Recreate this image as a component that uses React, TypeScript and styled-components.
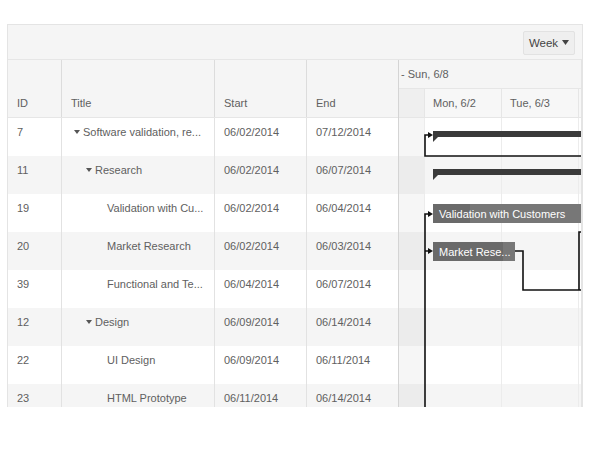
import React from 'react';
import styled, { createGlobalStyle } from 'styled-components';

const GlobalStyle = createGlobalStyle`
  body {
    margin: 0;
    background: #ffffff;
    font-family: "Liberation Sans", Arial, sans-serif;
    font-size: 11px;
    color: #606060;
  }
`;

const ROW_HEIGHT = 38;
const DAY_WIDTH = 77;
const SCROLL_LEFT = 51;

interface ITask {
  id: number;
  title: string;
  start: string;
  end: string;
  level: number;
  summary?: boolean;
}

const tasks: ITask[] = [
  { id: 7, title: 'Software validation, re...', start: '06/02/2014', end: '07/12/2014', level: 0, summary: true },
  { id: 11, title: 'Research', start: '06/02/2014', end: '06/07/2014', level: 1, summary: true },
  { id: 19, title: 'Validation with Cu...', start: '06/02/2014', end: '06/04/2014', level: 2 },
  { id: 20, title: 'Market Research', start: '06/02/2014', end: '06/03/2014', level: 2 },
  { id: 39, title: 'Functional and Te...', start: '06/04/2014', end: '06/07/2014', level: 2 },
  { id: 12, title: 'Design', start: '06/09/2014', end: '06/14/2014', level: 1, summary: true },
  { id: 22, title: 'UI Design', start: '06/09/2014', end: '06/11/2014', level: 2 },
  { id: 23, title: 'HTML Prototype', start: '06/11/2014', end: '06/14/2014', level: 2 },
];

// only the days that fall inside the visible part of the timeline
const days = [
  { label: 'Sun, 6/1', weekend: true },
  { label: 'Mon, 6/2' },
  { label: 'Tue, 6/3' },
  { label: '' },
];

// bars in timeline coordinates (left edge = Sunday column start)
const bars = [
  { row: 0, left: 85, width: 420, summary: true },
  { row: 1, left: 85, width: 420, summary: true },
  { row: 2, left: 85, width: 420, title: 'Validation with Customers', progress: 37 },
  { row: 3, left: 85, width: 82, title: 'Market Rese...', progress: 70 },
];

function Caret() {
  return (
    <CaretBox>
      <svg width="6" height="4" viewBox="0 0 6 4">
        <polygon points="0,0 6,0 3,4" fill="#555" />
      </svg>
    </CaretBox>
  );
}

function Arrow({ x, y }: { x: number; y: number }) {
  return <polygon points={`${x},${y - 3} ${x + 5},${y} ${x},${y + 3}`} fill="#111" />;
}

function Dependencies() {
  return (
    <Lines width="260" height="300">
      <g fill="none" stroke="#111" strokeWidth="1.6">
        <path d="M260,38 H77 V17 H81" />
        <path d="M77,300 V96 H81 M77,133 H81" />
        <path d="M167,133 H175 V172 H260 M231,172 V114 H260" />
      </g>
      <Arrow x={80} y={17} />
      <Arrow x={80} y={96} />
      <Arrow x={80} y={133} />
    </Lines>
  );
}

export default function App() {
  return (
    <>
      <GlobalStyle />
      <Gantt>
        <Toolbar>
          <ViewButton>
            Week
            <svg width="7" height="5" viewBox="0 0 7 5">
              <polygon points="0,0 7,0 3.5,5" fill="#444" />
            </svg>
          </ViewButton>
        </Toolbar>
        <Panes>
          <TreeList>
            <HeaderRow>
              <HeaderCell>ID</HeaderCell>
              <HeaderCell>Title</HeaderCell>
              <HeaderCell>Start</HeaderCell>
              <HeaderCell last>End</HeaderCell>
            </HeaderRow>
            {tasks.map((task, i) => (
              <Row key={task.id} alt={i % 2 === 1}>
                <Cell>{task.id}</Cell>
                <Cell>
                  <Indent style={{ width: task.level * 12 }} />
                  {task.summary ? <Caret /> : <CaretBox />}
                  <Text>{task.title}</Text>
                </Cell>
                <Cell>{task.start}</Cell>
                <Cell last>{task.end}</Cell>
              </Row>
            ))}
          </TreeList>
          <Timeline>
            <TimeHeader>
              <WeekRow>- Sun, 6/8</WeekRow>
              <Scroller>
                <DayRow>
                  {days.map((day, i) => (
                    <DayCell key={i} weekend={day.weekend}>
                      {day.weekend ? '' : day.label}
                    </DayCell>
                  ))}
                </DayRow>
              </Scroller>
            </TimeHeader>
            <Scroller>
              <TimeBody>
                {tasks.map((task, i) => (
                  <TimeRow key={task.id} alt={i % 2 === 1}>
                    {days.map((day, j) => (
                      <Slot key={j} weekend={day.weekend} />
                    ))}
                  </TimeRow>
                ))}
                <Dependencies />
                {bars.map(bar =>
                  bar.summary ? (
                    <SummaryBar
                      key={bar.row}
                      style={{ top: bar.row * ROW_HEIGHT + 13, left: bar.left, width: bar.width }}
                    />
                  ) : (
                    <TaskBar
                      key={bar.row}
                      style={{ top: bar.row * ROW_HEIGHT + 10, left: bar.left, width: bar.width }}
                    >
                      <Progress style={{ width: bar.progress }} />
                      <BarLabel>{bar.title}</BarLabel>
                    </TaskBar>
                  ),
                )}
              </TimeBody>
            </Scroller>
          </Timeline>
        </Panes>
      </Gantt>
    </>
  );
}

const Gantt = styled.div`
  margin: 24px 7px 0;
  height: 383px;
  border: 1px solid #e4e4e4;
  border-bottom: 0;
  box-sizing: border-box;
  display: flex;
  flex-direction: column;
  overflow: hidden;
`;

const Toolbar = styled.div`
  height: 35px;
  flex: none;
  box-sizing: border-box;
  background: #f5f5f5;
  border-bottom: 1px solid #e6e6e6;
  display: flex;
  align-items: center;
  justify-content: flex-end;
  padding-right: 7px;
`;

const ViewButton = styled.button`
  height: 24px;
  width: 52px;
  margin-top: 1px;
  display: flex;
  align-items: center;
  justify-content: center;
  gap: 4px;
  padding: 0;
  font: inherit;
  font-size: 11.5px;
  color: #444;
  background: #efefef;
  border: 1px solid #e2e2e2;
  border-radius: 2px;
`;

const Panes = styled.div`
  display: flex;
  flex: 1;
  min-height: 0;
`;

const TreeList = styled.div`
  width: 391px;
  flex: none;
  border-right: 1px solid #d4d4d4;
  box-sizing: border-box;
`;

const columns = '54px 153px 92px 91px';

const HeaderRow = styled.div`
  display: grid;
  grid-template-columns: ${columns};
  height: 58px;
  box-sizing: border-box;
  background: #f5f5f5;
  border-bottom: 1px solid #e6e6e6;
`;

const HeaderCell = styled.div<{ last?: boolean }>`
  display: flex;
  align-items: flex-end;
  padding: 0 0 7px 9px;
  line-height: 14px;
  border-right: ${p => (p.last ? '0' : '1px solid #dcdcdc')};
`;

const Row = styled.div<{ alt?: boolean }>`
  display: grid;
  grid-template-columns: ${columns};
  height: ${ROW_HEIGHT}px;
  background: ${p => (p.alt ? '#f5f5f5' : '#ffffff')};
`;

const Cell = styled.div<{ last?: boolean }>`
  display: flex;
  align-items: flex-start;
  padding: 7px 0 0 9px;
  line-height: 14px;
  white-space: nowrap;
  overflow: hidden;
  border-right: ${p => (p.last ? '0' : '1px solid #e2e2e2')};
`;

const Indent = styled.span`
  flex: none;
`;

const CaretBox = styled.span`
  flex: none;
  width: 12px;
  height: 14px;
  display: flex;
  align-items: center;
  justify-content: center;
`;

const Text = styled.span``;

const Timeline = styled.div`
  flex: 1;
  min-width: 0;
  overflow: hidden;
  border-right: 1px solid #e4e4e4;
`;

const TimeHeader = styled.div`
  height: 58px;
  box-sizing: border-box;
  background: #f5f5f5;
  border-bottom: 1px solid #e6e6e6;
`;

const WeekRow = styled.div`
  height: 29px;
  box-sizing: border-box;
  border-bottom: 1px solid #e6e6e6;
  display: flex;
  align-items: center;
  padding-left: 2px;
  white-space: nowrap;
`;

const Scroller = styled.div`
  margin-left: -${SCROLL_LEFT}px;
`;

const DayRow = styled.div`
  display: flex;
  height: 28px;
`;

const DayCell = styled.div<{ weekend?: boolean }>`
  width: ${DAY_WIDTH}px;
  flex: none;
  box-sizing: border-box;
  border-right: 1px solid #e6e6e6;
  padding-left: 8px;
  display: flex;
  align-items: center;
  white-space: nowrap;
  background: ${p => (p.weekend ? '#efefef' : '#f7f7f7')};
`;

const TimeBody = styled.div`
  position: relative;
`;

const TimeRow = styled.div<{ alt?: boolean }>`
  display: flex;
  height: ${ROW_HEIGHT}px;
  background: ${p => (p.alt ? '#f5f5f5' : '#ffffff')};
`;

const Slot = styled.div<{ weekend?: boolean }>`
  width: ${DAY_WIDTH}px;
  flex: none;
  box-sizing: border-box;
  border-right: 1px solid #ececec;
  background: ${p => (p.weekend ? 'rgba(0, 0, 0, 0.035)' : 'transparent')};
`;

const Lines = styled.svg`
  position: absolute;
  left: 0;
  top: 0;
  overflow: visible;
`;

const SummaryBar = styled.div`
  position: absolute;
  height: 6px;
  background: #3a3a3a;

  &::before {
    content: '';
    position: absolute;
    left: 0;
    top: 6px;
    border-top: 5px solid #3a3a3a;
    border-right: 5px solid transparent;
  }
`;

const TaskBar = styled.div`
  position: absolute;
  height: 19px;
  background: #777777;
  overflow: hidden;
  display: flex;
  align-items: center;
`;

const Progress = styled.div`
  position: absolute;
  left: 0;
  top: 0;
  bottom: 0;
  background: #6a6a6a;
`;

const BarLabel = styled.span`
  position: relative;
  padding-left: 6px;
  color: #ffffff;
  white-space: nowrap;
`;
